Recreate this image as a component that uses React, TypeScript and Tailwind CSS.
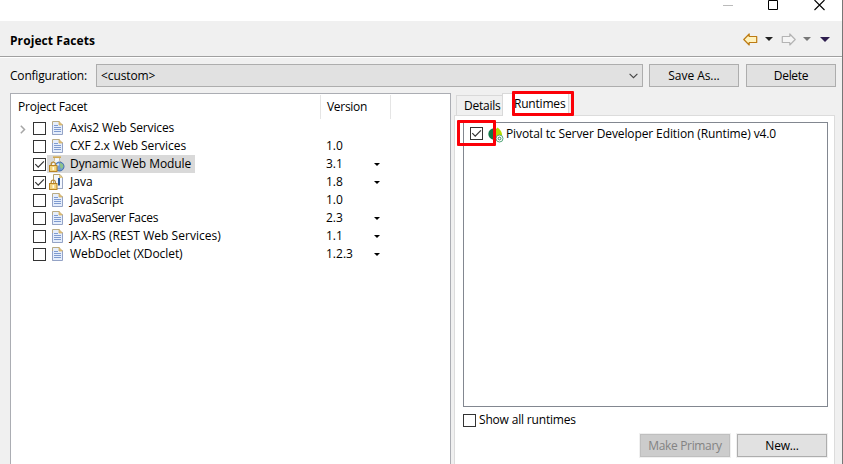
import React from "react";

const DocIcon = () => (
  <svg width="12" height="14" viewBox="0 0 12 14">
    <path d="M.5.5h7l3 3v10H.5z" fill="#e6eefb" />
    <path d="M.5 13.500V.5h7" fill="none" stroke="#b8ab86" />
    <path d="M.5 4v9.500h10V3.500" fill="none" stroke="#94a3c6" />
    <path d="M7 .5 10.500 4H7z" fill="#e3c27a" stroke="#cda95c" strokeWidth=".7" />
    <path d="M2 4.500h4M2 6.500h7M2 8.500h7M2 10.500h7" stroke="#7f9bd0" />
  </svg>
);

const Lock = () => (
  <g>
    <path d="M2.200 10V8.300a2.100 2.100 0 0 1 4.200 0V10" fill="none" stroke="#b98e3c" strokeWidth="1.300" />
    <rect x=".5" y="9.500" width="7.500" height="6" fill="#f2d37c" stroke="#b98425" />
    <rect x="3.500" y="11" width="1.700" height="3" fill="#fffbe6" />
  </g>
);

const WebIcon = () => (
  <svg width="16" height="16" viewBox="0 0 16 16">
    <path d="M5.500 1.500v3L2.500 8v5.500h10L14.500 9l-4-4.500v-3z" fill="#f1f4f7" stroke="#c9b075" strokeWidth=".8" />
    <path d="M4 1.200h8" stroke="#d0a850" strokeWidth="1.600" />
    <path d="M6.500 3.500h3" stroke="#fff" />
    <circle cx="10.500" cy="10.500" r="4.500" fill="#6f9bd2" stroke="#456fae" />
    <path d="M11 6.800l3 1.700.3 2.500-2 2-1.500-3z" fill="#8fc389" />
    <path d="M7.500 8.500l2-1.500.8 2-2 1.500z" fill="#d7e7f7" />
    <Lock />
  </svg>
);

const JavaIcon = () => (
  <svg width="16" height="16" viewBox="0 0 16 16">
    <path d="M4.500.5h6.500l2.500 3v11h-9z" fill="#f3f7fe" stroke="#b6a16b" />
    <path d="M10 .5l3.500 3.500H10z" fill="#e5c678" />
    <path d="M13.500 4v10.500H7" fill="none" stroke="#9aa6c3" />
    <path d="M10 4v7.500" stroke="#295898" strokeWidth="2" />
    <Lock />
  </svg>
);

const PivotalIcon = () => (
  <svg width="16" height="16" viewBox="0 0 16 16">
    <circle cx="6" cy="7" r="5.700" fill="#137a49" />
    <path d="M9.300.5C12.500 2.500 14.500 5.500 14 9.500L9.500 12C6.500 9 6.500 4.500 9.300.5z" fill="#b5dc00" />
    <circle cx="11.500" cy="11.500" r="3.500" fill="#fff" stroke="#55a77b" />
    <circle cx="11.500" cy="11.500" r="1.400" fill="#fff" stroke="#348b61" />
  </svg>
);

const Check = ({ on = false }: { on?: boolean }) => (
  <span className="flex size-[13px] shrink-0 border border-[#333] bg-white">
    {on && (
      <svg width="11" height="11" viewBox="0 0 11 11">
        <path d="M1.300 5.200 4.200 8.100 9.900 2.400" fill="none" stroke="#333" strokeWidth="1.200" />
      </svg>
    )}
  </span>
);

const Arrow = ({ flip = false, stroke, fill }: { flip?: boolean; stroke: string; fill: string }) => (
  <svg width="15" height="13" viewBox="0 0 15 13" className={flip ? "-scale-x-100" : ""}>
    <path d="M.8 6.500 6.200 1v2.500h7.500v6H6.200V12z" fill={fill} stroke={stroke} strokeWidth="1.200" strokeLinejoin="round" />
  </svg>
);

const Down = ({ w, h, c }: { w: number; h: number; c: string }) => (
  <svg width={w} height={h} viewBox={`0 0 ${w} ${h}`} className="block">
    <path d={`M0 0H${w}L${w / 2} ${h}z`} fill={c} />
  </svg>
);

const facets = [
  { name: "Axis2 Web Services", version: "", menu: false, on: false, cls: "tracking-[-0.12px]" },
  { name: "CXF 2.x Web Services", version: "1.0", menu: false, on: false, cls: "tracking-[-0.04px]" },
  { name: "Dynamic Web Module", version: "3.1", menu: true, on: true, cls: "tracking-[-0.07px]" },
  { name: "Java", version: "1.8", menu: true, on: true, cls: "" },
  { name: "JavaScript", version: "1.0", menu: false, on: false, cls: "tracking-[-0.1px]" },
  { name: "JavaServer Faces", version: "2.3", menu: true, on: false, cls: "tracking-[-0.28px]" },
  { name: "JAX-RS (REST Web Services)", version: "1.1", menu: true, on: false, cls: "tracking-[0.04px]" },
  { name: "WebDoclet (XDoclet)", version: "1.2.3", menu: true, on: false, cls: "tracking-[-0.06px]" },
];

const btn = "flex h-[23px] w-[90px] items-center justify-center border";

export default function App() {
  return (
    <div className="relative flex h-[464px] w-[843px] overflow-hidden bg-[#f0f0f0] font-['Open_Sans','Noto_Sans_CJK_KR',sans-serif] text-[12px] leading-[18px] text-black">
      <div className="flex w-[842px] flex-col">
        <div className="flex h-[21px] justify-end bg-white pr-[17px]">
          <svg width="103" height="12" viewBox="0 0 103 12">
            <path d="M1 5.500h10" stroke="#bbb" />
            <path d="M46.500.5h9v9h-9z" fill="none" stroke="#000" />
            <path d="M92.500 0l10 10M102.500 0l-10 10" stroke="#000" strokeWidth="1.100" />
          </svg>
        </div>
        <header className="flex h-[35px] items-center pl-[10px] pr-[12px]">
          <h1 className="flex-1 pt-[4px] font-bold tracking-[0.08px]">Project Facets</h1>
          <div className="flex items-center pt-[1px]">
            <Arrow stroke="#bd7b13" fill="#fff2bd" />
            <div className="ml-[7px]"><Down w={8} h={4} c="#222" /></div>
            <div className="ml-[8px] flex"><Arrow flip stroke="#b4b4b4" fill="#f5f5f5" /></div>
            <div className="ml-[7px]"><Down w={8} h={4} c="#777" /></div>
            <div className="ml-[9px]"><Down w={10} h={5} c="#2d1d4e" /></div>
          </div>
        </header>
        <div className="h-[2px] border-t border-[#a0a0a0] bg-white" />
        <div className="flex h-[35px] items-center pl-[10px]">
          <span className="w-[86px] tracking-[-0.2px]">Configuration:</span>
          <div className="flex h-[23px] w-[547px] items-center justify-between border border-[#adadad] bg-[#e1e1e1] pl-1 pr-[4px]">
            <span className="tracking-[-0.1px]">&lt;custom&gt;</span>
            <svg width="9" height="6" viewBox="0 0 9 6"><path d="M.6.800l3.900 3.900L8.400.800" fill="none" stroke="#444" strokeWidth="1.100" /></svg>
          </div>
          <div className={`${btn} ml-[6px] border-[#adadad] bg-[#e1e1e1] tracking-[-0.05px]`}>Save As...</div>
          <div className={`${btn} ml-[7px] border-[#adadad] bg-[#e1e1e1] tracking-[-0.3px]`}>Delete</div>
        </div>
        <main className="flex h-[371px] pl-[10px]">
          <section className="w-[441px] border-x border-t border-[#abadb3] bg-white">
            <div className="mt-px flex h-[24px] items-center">
              <span className="w-[309px] pl-[7px] tracking-[-0.2px]">Project Facet</span>
              <span className="flex h-full w-[71px] items-center border-x border-[#e5e5e5] pl-[6px] tracking-[-0.3px]">Version</span>
            </div>
            {facets.map((f, i) => (
              <div key={f.name} className="flex h-[18px]">
                <span className="flex w-[22px] items-center pl-[9px] pt-[3px]">
                  {i === 0 && (
                    <svg width="6" height="9" viewBox="0 0 6 9"><path d="M.8.800 4.500 4.500.8 8.200" fill="none" stroke="#a6a6a6" strokeWidth="1.500" /></svg>
                  )}
                </span>
                <span className="w-[14px] pt-[3px]"><Check on={f.on} /></span>
                <span className="flex w-[279px]">
                  <span className={`flex pr-[4px] ${i === 2 ? "bg-[#d9d9d9]" : ""}`}>
                    <span className="flex w-[23px] items-center pl-[2px]">
                      {i === 2 ? <WebIcon /> : i === 3 ? <JavaIcon /> : <span className="pl-[3px]"><DocIcon /></span>}
                    </span>
                    <span className={f.cls}>{f.name}</span>
                  </span>
                </span>
                <span className="w-[48px]">{f.version}</span>
                {f.menu && <span className="pt-[8px]"><Down w={6} h={3} c="#000" /></span>}
              </div>
            ))}
          </section>
          <section className="ml-[3px] flex w-[381px] flex-col">
            <div className="flex h-[22px] items-end pl-[2px]">
              <span className="flex h-[20px] w-[46px] items-center border-l border-t border-[#d9d9d9] pl-[7px] tracking-[-0.25px]">Details</span>
              <span className="relative z-10 -mb-px flex h-[23px] w-[67px] items-start border-x border-t border-[#d9d9d9] bg-white pl-[11px] pt-[1px] tracking-[-0.2px]">Runtimes</span>
            </div>
            <div className="flex-1 border-x border-t border-[#dcdcdc] bg-white pl-[8px] pt-[6px]">
              <div className="h-[285px] w-[365px] border border-[#828790] pl-[6px]">
                <div className="flex h-[20px] items-center">
                  <Check on />
                  <span className="ml-[5px] mr-[2px] pt-[3px]"><PivotalIcon /></span>
                  <span className="pt-[2px] tracking-[-0.11px]">Pivotal tc Server Developer Edition (Runtime) v4.0</span>
                </div>
              </div>
              <div className="mt-[4px] flex h-[18px] items-center gap-[3px]">
                <Check />
                <span className="tracking-[-0.18px]">Show all runtimes</span>
              </div>
              <div className="mt-[5px] flex gap-[7px] pl-[177px]">
                <div className={`${btn} border-[#bfbfbf] bg-[#ccc] text-[#838383] outline outline-[#f0f0f0] tracking-[0.2px]`}><span className="tracking-[-0.35px]">Make Primary</span></div>
                <div className={`${btn} border-[#adadad] bg-[#e1e1e1] outline outline-[#f0f0f0] tracking-[-0.2px]`}>New...</div>
              </div>
            </div>
          </section>
        </main>
      </div>
      <div className="w-px bg-[#777]" />
      <div className="absolute left-[512px] top-[91px] z-20 h-[25px] w-[62px] rounded-[1px] border-[3px] border-[#fb0007]" />
      <div className="absolute left-[457px] top-[120px] z-20 h-[26px] w-[39px] rounded-[1px] border-[3px] border-[#fb0007]" />
    </div>
  );
}
